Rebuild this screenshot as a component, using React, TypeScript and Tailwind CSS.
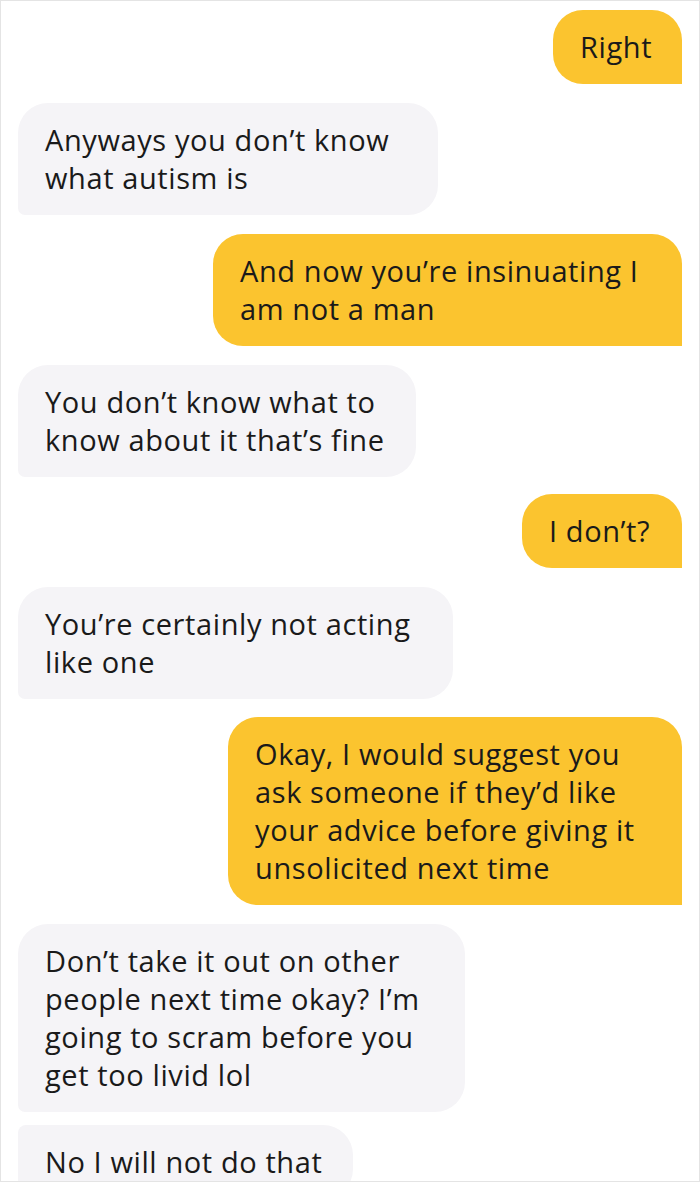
import React from "react";

type Msg = {
  mine: boolean;
  lines: string[];
  w: string;
  extra?: string;
};

const messages: Msg[] = [
  { mine: true, lines: ["Right"], w: "w-[129px]" },
  { mine: false, lines: ["Anyways you don’t know", "what autism is"], w: "w-[420px]" },
  { mine: true, lines: ["And now you’re insinuating I", "am not a man"], w: "w-[469px]" },
  { mine: false, lines: ["You don’t know what to", "know about it that’s fine"], w: "w-[398px]" },
  { mine: true, lines: ["I don’t?"], w: "w-[160px]", extra: "-mt-[2px]" },
  { mine: false, lines: ["You’re certainly not acting", "like one"], w: "w-[435px]" },
  {
    mine: true,
    lines: [
      "Okay, I would suggest you",
      "ask someone if they’d like",
      "your advice before giving it",
      "unsolicited next time",
    ],
    w: "w-[454px]",
    extra: "-mt-[1px]",
  },
  {
    mine: false,
    lines: [
      "Don’t take it out on other",
      "people next time okay? I’m",
      "going to scram before you",
      "get too livid lol",
    ],
    w: "w-[447px]",
  },
  {
    mine: false,
    lines: ["No I will not do that"],
    w: "w-[335px]",
    extra: "rounded-tl-[8px] -mt-[6px]",
  },
];

const Bubble: React.FC<{ msg: Msg }> = ({ msg }) => {
  const base = msg.mine
    ? "self-end bg-[#fbc42f] rounded-[30px] rounded-br-none"
    : "self-start bg-[#f5f4f7] rounded-[30px] rounded-bl-[7px]";
  return (
    <div className={`${base} ${msg.w} ${msg.extra ?? ""} px-[27px] py-[18px]`}>
      {msg.lines.map((l, i) => (
        <div key={i} className="whitespace-nowrap leading-[38px]">
          {l}
        </div>
      ))}
    </div>
  );
};

export default function App() {
  return (
    <div className="w-[700px] h-[1182px] overflow-hidden bg-white border border-[#e4e4e4] font-['Open_Sans','Liberation_Sans',sans-serif] text-[29px] tracking-[0.6px] text-[#1a1a1a]">
      <div className="flex flex-col gap-[19px] pt-[9px] pl-[17px] pr-[17px]">
        {messages.map((m, i) => (
          <Bubble key={i} msg={m} />
        ))}
      </div>
    </div>
  );
}
